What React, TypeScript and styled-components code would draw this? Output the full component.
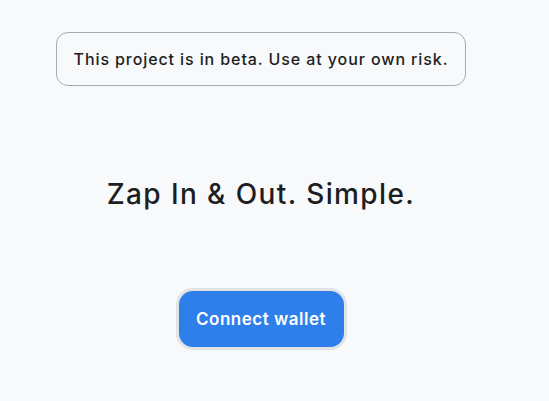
import styled, { createGlobalStyle } from 'styled-components'

const GlobalStyle = createGlobalStyle`
  html, body {
    margin: 0;
    padding: 0;
    background: #f8f9fb;
  }
  body {
    font-family: Inter, "Open Sans", "Liberation Sans", sans-serif;
    color: #1f2124;
  }
`

export default function App() {
  return (
    <>
      <GlobalStyle />
      <Page>
        <BetaNotice>This project is in beta. Use at your own risk.</BetaNotice>
        <Headline>Zap In &amp; Out. Simple.</Headline>
        <ConnectButton>Connect wallet</ConnectButton>
      </Page>
    </>
  )
}

const Page = styled.main`
  width: 410px;
  margin-left: 56px;
  padding-top: 32px;
  display: flex;
  flex-direction: column;
  align-items: center;
`

const BetaNotice = styled.div`
  box-sizing: border-box;
  width: 100%;
  height: 54px;
  display: flex;
  align-items: center;
  justify-content: center;
  border: 1px solid #a9abae;
  border-radius: 12px;
  font-size: 16px;
  font-weight: 500;
  letter-spacing: 0.9px;
  color: #1c1e22;
`

const Headline = styled.h1`
  margin: 91px 0 0;
  font-size: 28px;
  line-height: 34px;
  font-weight: 500;
  letter-spacing: 1.4px;
  color: #1c1e22;
`

const ConnectButton = styled.button`
  box-sizing: border-box;
  margin-top: 77px;
  width: 171px;
  height: 62px;
  border: 3px solid #e1e3e6;
  border-radius: 17px;
  background: #2e7fea;
  color: #fff;
  font-family: inherit;
  font-size: 17px;
  font-weight: 600;
  letter-spacing: 0.5px;
  cursor: pointer;
`
